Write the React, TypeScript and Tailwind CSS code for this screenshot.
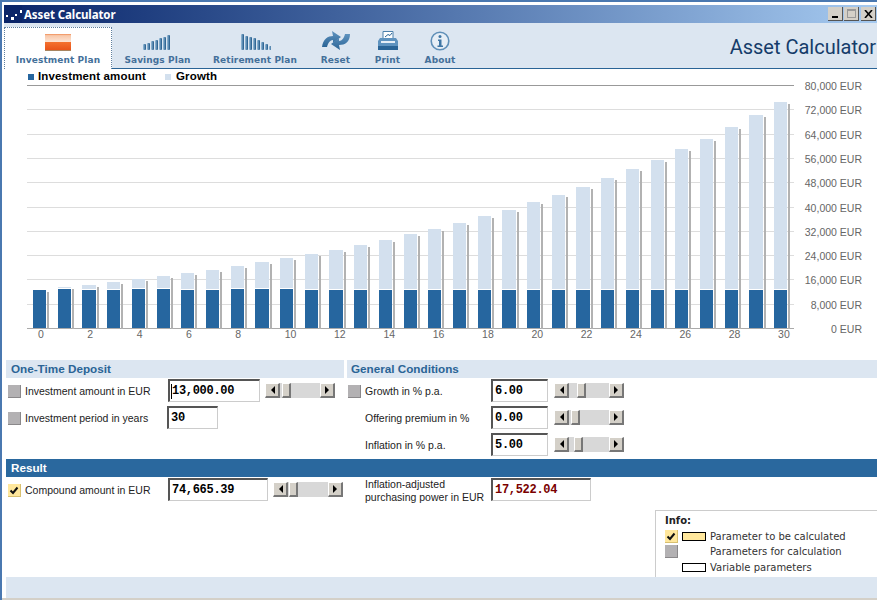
const years = Array.from({ length: 31 }, (_, i) => i);
const highBars = [1, 4, 5, 8, 9, 10];

const Checkbox = ({ type }: { type: "none" | "gray" | "check" }) => {
    if (type === "none") return <div className="w-[13px] h-[13px]" />;
    if (type === "gray") {
        return <div className="w-[13px] h-[13px] bg-[#b3b1b3] border-r border-b border-[#8a888a]" />;
    }
    return (
        <div className="w-[13px] h-[13px] bg-[#ffe79c] border-r border-b border-[#d8c070] flex items-center justify-center">
            <svg width="10" height="9" viewBox="0 0 10 9">
                <path d="M1.5 4.5 L4 7 L8.5 1.5" fill="none" stroke="#111" strokeWidth="2" />
            </svg>
        </div>
    );
};

const RowLabel = ({ type, text, width }: { type: "none" | "gray" | "check"; text: string; width: string }) => (
    <div className="mt-[2px] flex items-center gap-[4px]">
        <Checkbox type={type} />
        <div className={`text-[10.5px] leading-[13px] text-[#222] ${width}`}>{text}</div>
    </div>
);

const Arrow = ({ dir }: { dir: "left" | "right" }) => (
    <div className="w-[15px] h-[15px] bg-[#d4d0c8] border-t border-l border-r-2 border-b-2 border-t-white border-l-white border-r-[#777] border-b-[#777] flex items-center justify-center">
        <svg width="5" height="8" viewBox="0 0 5 8">
            <path d={dir === "left" ? "M5 0 L1 4 L5 8 Z" : "M0 0 L4 4 L0 8 Z"} fill="#000" />
        </svg>
    </div>
);

const Scroller = ({ thumb }: { thumb: number }) => (
    <div className="flex h-[15px] w-[70px] bg-[#d8d8d8]">
        <Arrow dir="left" />
        <div className="flex-1">
            <div className="w-[9px] h-[15px] bg-[#d4d0c8] border-t border-l border-r-2 border-b-2 border-t-white border-l-white border-r-[#777] border-b-[#777]" style={{ marginLeft: thumb }} />
        </div>
        <Arrow dir="right" />
    </div>
);

const ValueBox = ({ value, width, red, caret }: { value: string; width: string; red?: boolean; caret?: boolean }) => (
    <div className={`relative h-[23px] bg-white border-t-2 border-l-2 border-r border-b border-t-[#555] border-l-[#555] border-r-[#ccc] border-b-[#ccc] flex items-center pl-[2px] pb-[1px] font-['Liberation_Mono',monospace] font-bold text-[12px] tracking-[-0.3px] ${width} ${red ? "text-[#7a0000]" : "text-black"}`}>
        {caret && <div className="absolute left-[1px] top-[3px] w-px h-[15px] bg-black" />}
        {value}
    </div>
);

const ToolItem = ({ label, width, children }: { label: string; width: string; children: React.ReactNode }) => (
    <div className={`flex flex-col items-center h-[45px] ${width}`}>
        <div className="h-[28px] flex items-end justify-center">{children}</div>
        <div className="mt-[4px] font-['DejaVu_Sans',sans-serif] font-bold text-[9px] leading-[11px] tracking-[0.1px] text-[#44709a] whitespace-nowrap">{label}</div>
    </div>
);

const BarsIcon = ({ heights }: { heights: number[] }) => (
    <svg width="31" height="17" viewBox="0 0 31 17">
        {heights.map((h, i) => (
            <rect key={i} x={1 + i * 4} y={16 - h} width="3" height={h} rx="1" fill="url(#barShade)" />
        ))}
    </svg>
);

export default function App() {
    return (
        <div className="w-[877px] h-[600px] overflow-hidden bg-white border-l-2 border-t-2 border-[#4a78b0] font-['Liberation_Sans',Arial,sans-serif]">
            <svg width="0" height="0" className="absolute">
                <defs>
                    <linearGradient id="barShade" x1="0" x2="1" y1="0" y2="0">
                        <stop offset="0" stopColor="#9cc0dc" />
                        <stop offset="1" stopColor="#1c5688" />
                    </linearGradient>
                    <linearGradient id="iconBlue" x1="0" x2="0" y1="0" y2="1">
                        <stop offset="0" stopColor="#5f93bf" />
                        <stop offset="1" stopColor="#2a6496" />
                    </linearGradient>
                    <linearGradient id="orangeBox" x1="0" x2="0" y1="0" y2="1">
                        <stop offset="0" stopColor="#f08a52" />
                        <stop offset="0.1" stopColor="#f8c8aa" />
                        <stop offset="0.48" stopColor="#fde3d2" />
                        <stop offset="0.52" stopColor="#f4702e" />
                        <stop offset="1" stopColor="#e8541a" />
                    </linearGradient>
                </defs>
            </svg>

            {/* title bar */}
            <div className="mt-[3px] ml-[2px] h-[18px] flex items-center bg-gradient-to-r from-[#0a246a] to-[#a6caf0]">
                <div className="w-[18px] h-[18px] bg-[#0a2468] shrink-0">
                    <svg width="18" height="18" viewBox="0 0 18 18">
                        <rect x="2" y="10" width="2" height="2" fill="#fff" />
                        <rect x="7" y="12" width="3" height="3" fill="#fff" />
                        <rect x="11" y="9" width="2" height="2" fill="#fff" />
                        <rect x="16" y="5" width="2" height="3" fill="#fff" />
                    </svg>
                </div>
                <div className="ml-[2px] pt-[2px] font-['Noto_Sans',sans-serif] font-bold text-[11.5px] leading-[16px] tracking-[-0.1px] text-white">Asset Calculator</div>
                <div className="ml-auto mr-[1px] flex">
                    <div className="w-[15px] h-[14px] bg-[#d4d0c8] border-r border-b border-[#555] flex items-end justify-center pb-[2px]">
                        <div className="w-[6px] h-[2px] bg-black" />
                    </div>
                    <div className="ml-px w-[15px] h-[14px] bg-[#d4d0c8] border-r border-b border-[#555] flex items-center justify-center">
                        <div className="w-[9px] h-[9px] border border-t-2 border-[#999]" />
                    </div>
                    <div className="ml-[2px] w-[15px] h-[14px] bg-[#d4d0c8] border-r border-b border-[#555] flex items-center justify-center">
                        <svg width="9" height="8" viewBox="0 0 9 8">
                            <path d="M1 0 L8 8 M8 0 L1 8" stroke="#000" strokeWidth="1.6" />
                        </svg>
                    </div>
                </div>
            </div>

            {/* toolbar */}
            <div className="relative ml-[2px] h-[46px] bg-[#dce6f1] border-b border-[#2a6496] flex items-end">
                <div className="w-[108px] h-[42px] -mb-px bg-white border-x border-t border-dotted border-[#5f7f9f] flex flex-col items-center">
                    <div className="mt-[6px] w-[26px] h-[17px]">
                        <svg width="26" height="17" viewBox="0 0 26 17">
                            <rect x="0" y="0" width="26" height="16" fill="url(#orangeBox)" />
                            <rect x="0" y="16" width="26" height="1" fill="#a8845f" />
                        </svg>
                    </div>
                    <div className="mt-[4px] font-['DejaVu_Sans',sans-serif] font-bold text-[9px] leading-[11px] tracking-[0.1px] text-[#44709a] whitespace-nowrap">Investment Plan</div>
                </div>
                <ToolItem label="Savings Plan" width="w-[91px]">
                    <BarsIcon heights={[6, 7, 9, 10, 12, 13, 15]} />
                </ToolItem>
                <ToolItem label="Retirement Plan" width="w-[104px]">
                    <BarsIcon heights={[16, 14, 13, 12, 10, 8, 6, 4]} />
                </ToolItem>
                <ToolItem label="Reset" width="w-[57px]">
                    <svg width="30" height="21" viewBox="0 0 30 21">
                        <path d="M1 17 C2 9 7 6 12 6 L11 1 L20 7 L12 13 L12 10 C9 10 7 13 6 17 Z" fill="url(#iconBlue)" />
                        <path d="M29 4 C29 12 24 15 18 15 L19 20 L10 14 L18 8 L18 11 C21 11 23 8 24 4 Z" fill="url(#iconBlue)" />
                    </svg>
                </ToolItem>
                <ToolItem label="Print" width="w-[47px]">
                    <svg width="20" height="20" viewBox="0 0 20 20">
                        <path d="M5 0.5 H15 V8 H5 Z" fill="#fff" stroke="#4d80ab" />
                        <path d="M7 6 L10 3.5 L12 4.5 L14 2" fill="none" stroke="#2a6496" />
                        <path d="M2 7 H18 L20 10 V15 H0 V10 Z" fill="#5f93bf" />
                        <rect x="3" y="10" width="14" height="2" fill="#e6eef6" />
                        <rect x="0" y="15" width="20" height="4" fill="#2a6496" />
                    </svg>
                </ToolItem>
                <ToolItem label="About" width="w-[58px]">
                    <svg width="20" height="20" viewBox="0 0 20 20">
                        <circle cx="10" cy="10" r="8.8" fill="#e6eef6" stroke="#5f8fb8" strokeWidth="1.6" />
                        <circle cx="10" cy="5.5" r="1.5" fill="#3f76a5" />
                        <path d="M8 8.5 H11.5 V14.5 H13 V16 H7.5 V14.5 H9 V10 H8 Z" fill="#3f76a5" />
                    </svg>
                </ToolItem>
                <div className="absolute right-[1px] top-[11px] font-['Roboto',sans-serif] text-[20px] leading-[26px] text-[#153c6a]">Asset Calculator</div>
            </div>

            {/* legend */}
            <div className="h-[16px] pl-[26px] flex items-center text-[11.5px] tracking-[0.15px] font-bold text-black">
                <div className="w-[6px] h-[6px] bg-[#26669f] mr-[4px]" />
                <div className="w-[127px]">Investment amount</div>
                <div className="w-[6px] h-[6px] bg-[#d3e0ee] mr-[5px]" />
                <div>Growth</div>
            </div>

            {/* chart */}
            <svg width="875" height="275" viewBox="2 85 875 275" className="block overflow-visible">
                {[0, 1, 2, 3, 4, 5, 6, 7, 8, 9].map((n) => {
                    const y = Math.round(85 + n * 24.3);
                    const value = ((10 - n) * 8000).toLocaleString("en-US");
                    return (
                        <g key={n}>
                            <rect x="27" y={y} width="767" height="1" fill={n === 0 ? "#999999" : "#dddddd"} />
                            <text x="862" y={y + 5} textAnchor="end" fontSize="10.5" fill="#666666" fontFamily="Liberation Sans">{value} EUR</text>
                        </g>
                    );
                })}
                <text x="862" y="333" textAnchor="end" fontSize="10.5" fill="#666666" fontFamily="Liberation Sans">0 EUR</text>
                <rect x="27" y="328" width="767" height="1" fill="#aaaaaa" />
                {years.map((i) => {
                    const x = Math.round(33 + i * 24.7);
                    const w = Math.round(33 + (i + 1) * 24.7 - 0.5) - x - 11;
                    const top = Math.round(329 - (13000 * Math.pow(1.06, i) / 80000) * 243);
                    const blueTop = highBars.includes(i) ? 289 : 290;
                    return (
                        <g key={i}>
                            <rect x={x + w + 1} y={top + 2} width="2" height={327 - top} fill="#b2b2b2" />
                            {top < blueTop && <rect x={x} y={top} width={w} height={blueTop - top - 1} fill="#d3e0ee" />}
                            <rect x={x} y={blueTop} width={w} height={328 - blueTop} fill="#26669f" />
                        </g>
                    );
                })}
                {years.filter((i) => i % 2 === 0).map((i) => (
                    <text key={i} x={38 + i * 24.67} y="338" fontSize="10.5" fill="#666666" fontFamily="Liberation Sans">{i}</text>
                ))}
            </svg>

            {/* inputs */}
            <div className="flex">
                <div className="ml-[4px] w-[338px]">
                    <div className="h-[18px] bg-[#dce6f1] pl-[5px] text-[11.7px] leading-[18px] font-bold text-[#2a6496]">One-Time Deposit</div>
                    <div className="mt-px flex flex-col gap-[4px] pl-[2px]">
                        <div className="h-[23px] flex items-center">
                            <RowLabel type="gray" text="Investment amount in EUR" width="w-[143px]" />
                            <ValueBox value="13,000.00" width="w-[92px]" caret />
                            <div className="ml-[5px]"><Scroller thumb={2} /></div>
                        </div>
                        <div className="h-[23px] flex items-center">
                            <RowLabel type="gray" text="Investment period in years" width="w-[142px]" />
                            <ValueBox value="30" width="w-[51px]" />
                        </div>
                    </div>
                </div>
                <div className="ml-[3px] flex-1">
                    <div className="h-[18px] bg-[#dce6f1] pl-[4px] text-[11.7px] leading-[18px] font-bold text-[#2a6496]">General Conditions</div>
                    <div className="mt-px flex flex-col gap-[4px] pl-[1px]">
                        <div className="h-[23px] flex items-center">
                            <RowLabel type="gray" text="Growth in % p.a." width="w-[126px]" />
                            <ValueBox value="6.00" width="w-[57px]" />
                            <div className="ml-[6px]"><Scroller thumb={8} /></div>
                        </div>
                        <div className="h-[23px] flex items-center">
                            <RowLabel type="none" text="Offering premium in %" width="w-[126px]" />
                            <ValueBox value="0.00" width="w-[57px]" />
                            <div className="ml-[6px]"><Scroller thumb={2} /></div>
                        </div>
                        <div className="h-[23px] flex items-center">
                            <RowLabel type="none" text="Inflation in % p.a." width="w-[126px]" />
                            <ValueBox value="5.00" width="w-[57px]" />
                            <div className="ml-[6px]"><Scroller thumb={5} /></div>
                        </div>
                    </div>
                </div>
            </div>

            {/* result */}
            <div className="mt-[3px] ml-[4px] h-[18px] bg-[#2a689e] pl-[5px] text-[11.7px] leading-[18px] font-bold text-white">Result</div>
            <div className="mt-px flex h-[23px]">
                <div className="ml-[6px] w-[339px] h-[23px] flex items-center">
                    <RowLabel type="check" text="Compound amount in EUR" width="w-[143px]" />
                    <ValueBox value="74,665.39" width="w-[100px]" />
                    <div className="ml-[5px]"><Scroller thumb={1} /></div>
                </div>
                <div className="ml-[18px] w-[126px] text-[10.5px] leading-[13px] text-[#222] whitespace-nowrap">Inflation-adjusted<br />purchasing power in EUR</div>
                <ValueBox value="17,522.04" width="w-[100px]" red />
            </div>

            {/* info box */}
            <div className="mt-[9px] flex justify-end">
                <div className="w-[222px] h-[67px] border-l border-t border-[#ccc] pl-[9px] font-['DejaVu_Sans',sans-serif] text-[10px] text-[#333] bg-white">
                    <div className="mt-[3px] h-[13px] font-bold text-[#222] leading-[13px]">Info:</div>
                    <div className="mt-[2px] h-[15px] flex items-center gap-[4px]">
                        <Checkbox type="check" />
                        <div className="w-[24px] h-[9px] bg-[#ffe79c] border border-black" />
                        <div>Parameter to be calculated</div>
                    </div>
                    <div className="h-[15px] flex items-center gap-[4px]">
                        <Checkbox type="gray" />
                        <div className="w-[24px] h-[9px]" />
                        <div>Parameters for calculation</div>
                    </div>
                    <div className="h-[16px] flex items-center gap-[4px]">
                        <Checkbox type="none" />
                        <div className="w-[24px] h-[9px] bg-white border border-black" />
                        <div>Variable parameters</div>
                    </div>
                </div>
            </div>

            {/* footer */}
            <div className="ml-[4px] h-[21px] bg-[#dce6f1]" />
            <div className="h-[2px] bg-[#d4d0c8]" />
        </div>
    );
}
